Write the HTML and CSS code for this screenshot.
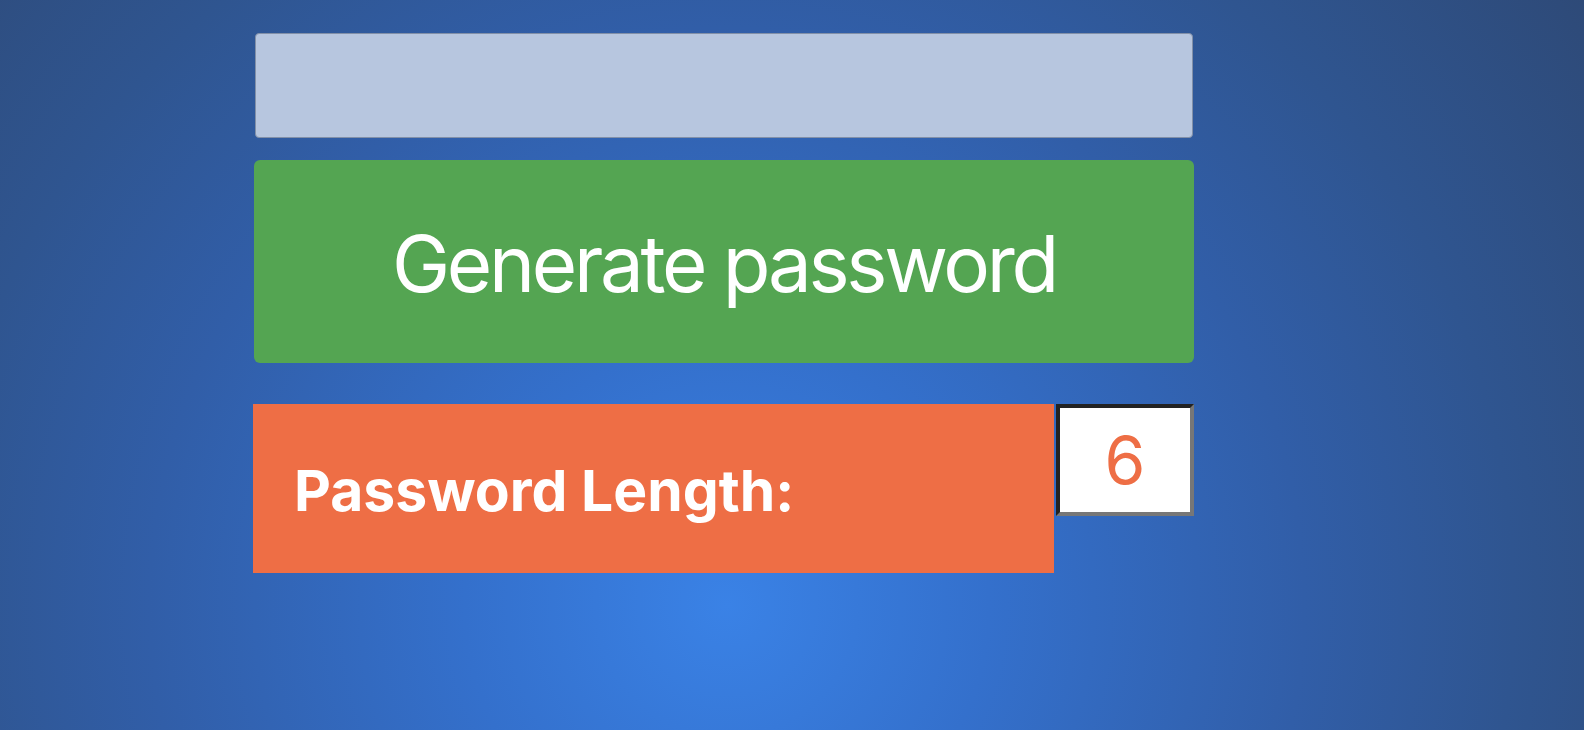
FILE: index.html
```html
<!DOCTYPE html>
<html lang="en">
<head>
<meta charset="utf-8">
<title>Password Generator</title>
<link rel="stylesheet" href="styles.css">
</head>
<body>
<main class="app">
  <div class="output"></div>
  <button class="generate">Generate password</button>
  <div class="length-row">
    <label class="length-label" for="len">Password Length:</label>
    <div class="length-input" id="len">6</div>
  </div>
</main>
</body>
</html>
```

FILE: styles.css
```css
html, body {
  margin: 0;
  padding: 0;
  height: 100%;
}

body {
  min-height: 730px;
  background: radial-gradient(circle farthest-corner at 727px 605px, #3a82e6 0%, #3470cc 25%, #315ea8 55%, #2f5590 75%, #2e4a78 100%);
  font-family: Inter, "Liberation Sans", sans-serif;
  overflow: hidden;
}

.app {
  display: flex;
  flex-direction: column;
  width: 941px;
  margin-left: 253px;
  padding-top: 33px;
}

.output {
  box-sizing: border-box;
  height: 105px;
  margin: 0 1px 0 2px;
  background: #b7c6df;
  border: 1px solid #8290a8;
  border-radius: 4px;
}

.generate {
  box-sizing: border-box;
  height: 203px;
  margin: 22px 0 0 1px;
  border: none;
  border-radius: 6px;
  background: #54a552;
  color: #ffffff;
  font-family: Inter, "Liberation Sans", sans-serif;
  font-size: 78px;
  letter-spacing: -3.3px;
  padding: 4px 0 0;
}

.length-row {
  display: flex;
  align-items: flex-start;
  gap: 2px;
  margin-top: 41px;
}

.length-label {
  box-sizing: border-box;
  display: flex;
  align-items: center;
  width: 801px;
  height: 169px;
  padding: 4px 0 0 41px;
  background: #ee6e45;
  color: #ffffff;
  font-family: Inter, "Liberation Sans", sans-serif;
  font-weight: 700;
  font-size: 57px;
}

.length-input {
  box-sizing: border-box;
  width: 138px;
  height: 112px;
  display: flex;
  align-items: center;
  justify-content: center;
  background: #ffffff;
  border-style: solid;
  border-width: 4px;
  border-color: #222222 #777777 #777777 #222222;
  color: #ee6e45;
  font-family: Inter, "Liberation Sans", sans-serif;
  font-size: 66px;
  padding-top: 0;
}
```
